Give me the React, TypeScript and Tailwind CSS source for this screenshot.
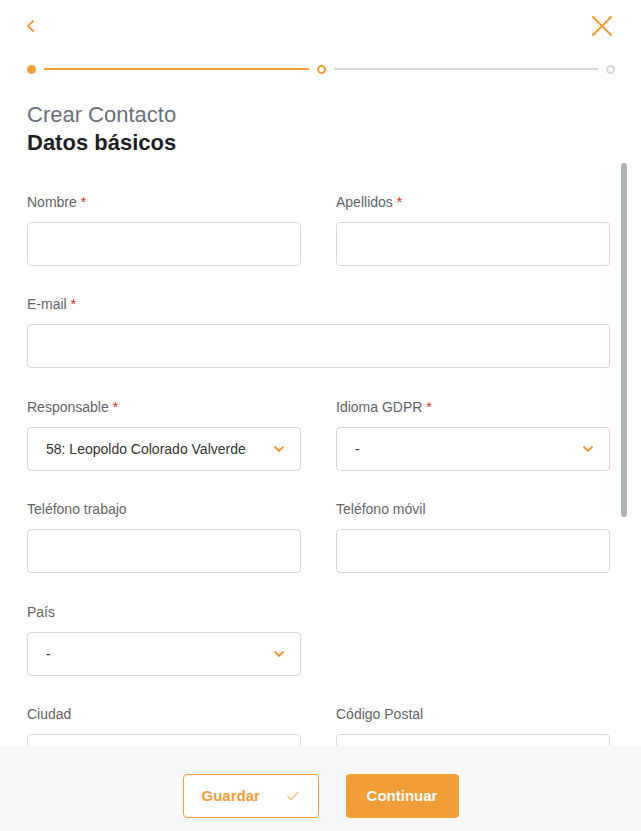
import React from 'react';

const ORANGE = '#f29d38';

function Label({ text, required }: { text: string; required?: boolean }) {
  return (
    <div className="h-5 text-[14px] leading-5 text-[#5f6368] mb-[10px]">
      {text}
      {required && <span className="text-[#e02424] ml-1">*</span>}
    </div>
  );
}

function TextField({ label, required }: { label: string; required?: boolean }) {
  return (
    <div>
      <Label text={label} required={required} />
      <div className="h-[44px] rounded-[4px] border border-[#d4d7dd] bg-white" />
    </div>
  );
}

function SelectField({ label, value, required }: { label: string; value: string; required?: boolean }) {
  return (
    <div>
      <Label text={label} required={required} />
      <div className="h-[44px] rounded-[4px] border border-[#d4d7dd] bg-white flex items-center pl-[18px] pr-[15px]">
        <span className="flex-1 text-[14px] text-[#333] truncate pt-[2px]">{value}</span>
        <svg width="12" height="8" viewBox="0 0 12 8" fill="none">
          <path d="M2 2l4 4 4-4" stroke={ORANGE} strokeWidth="2" strokeLinecap="round" strokeLinejoin="round" />
        </svg>
      </div>
    </div>
  );
}

export default function App() {
  return (
    <div
      className="w-[641px] h-[831px] bg-white flex flex-col overflow-hidden"
      style={{ fontFamily: '"Liberation Sans", Arial, sans-serif' }}
    >
      {/* top bar */}
      <div className="flex items-center justify-between pl-[25px] pr-[27px] pt-[14px] h-[37px] shrink-0">
        <svg width="12" height="20" viewBox="0 0 12 20" fill="none">
          <path d="M8 5l-5 5 5 5" stroke={ORANGE} strokeWidth="2" strokeLinecap="round" strokeLinejoin="round" />
        </svg>
        <svg width="24" height="24" viewBox="0 0 24 24" fill="none">
          <path d="M3 3l18 18M21 3L3 21" stroke={ORANGE} strokeWidth="2" strokeLinecap="round" />
        </svg>
      </div>

      {/* stepper */}
      <div className="flex items-center pl-[27px] pr-[26px] mt-[26px] h-[12px] shrink-0">
        <span className="w-[9px] h-[9px] rounded-full bg-[#f29d38] shrink-0" />
        <span className="flex-1 h-[2px] bg-[#f29d38] mx-[8px]" />
        <span className="w-[9px] h-[9px] rounded-full border-2 border-[#f29d38] shrink-0" />
        <span className="flex-1 h-[2px] bg-[#d3d6db] mx-[8px]" />
        <span className="w-[9px] h-[9px] rounded-full border-2 border-[#d3d6db] shrink-0" />
      </div>

      {/* title */}
      <div className="px-[27px] mt-[27px] shrink-0">
        <div className="text-[22px] leading-[26px] text-[#6b7078]">Crear Contacto</div>
        <div className="text-[22px] leading-[28px] mt-[1px] font-bold text-[#1d1f22]">Datos básicos</div>
      </div>

      {/* form */}
      <div className="relative flex-1 overflow-hidden mt-[4px]">
        <div className="pl-[27px] pr-[31px] pt-[31px] flex flex-col gap-[28.4px]">
          <div className="grid grid-cols-2 gap-x-[35px]">
            <TextField label="Nombre" required />
            <TextField label="Apellidos" required />
          </div>
          <TextField label="E-mail" required />
          <div className="grid grid-cols-2 gap-x-[35px]">
            <SelectField label="Responsable" value="58: Leopoldo Colorado Valverde" required />
            <SelectField label="Idioma GDPR" value="-" required />
          </div>
          <div className="grid grid-cols-2 gap-x-[35px]">
            <TextField label="Teléfono trabajo" />
            <TextField label="Teléfono móvil" />
          </div>
          <div className="grid grid-cols-2 gap-x-[35px]">
            <SelectField label="País" value="-" />
            <div />
          </div>
          <div className="grid grid-cols-2 gap-x-[35px]">
            <TextField label="Ciudad" />
            <TextField label="Código Postal" />
          </div>
        </div>
        {/* scrollbar thumb */}
        <div className="absolute right-[14px] top-[2px] w-[6px] h-[354px] rounded-full bg-[#adb3ba]" />
      </div>

      {/* footer */}
      <div className="h-[86px] bg-[#f7f8fa] flex items-start justify-center gap-[27px] pt-[29px] shrink-0">
        <button className="w-[136px] h-[44px] rounded-[4px] border border-[#f29d38] bg-white flex items-center pl-[18px] pr-[18px]">
          <span className="flex-1 text-left text-[15px] font-bold text-[#f29d38]">Guardar</span>
          <svg width="14" height="12" viewBox="0 0 14 12" fill="none">
            <path d="M2 6.5l3 3 7-7" stroke="#f5c48a" strokeWidth="1.6" strokeLinecap="round" strokeLinejoin="round" />
          </svg>
        </button>
        <button className="w-[113px] h-[44px] rounded-[4px] bg-[#f29d38] text-white text-[15px] font-bold">
          Continuar
        </button>
      </div>
    </div>
  );
}
